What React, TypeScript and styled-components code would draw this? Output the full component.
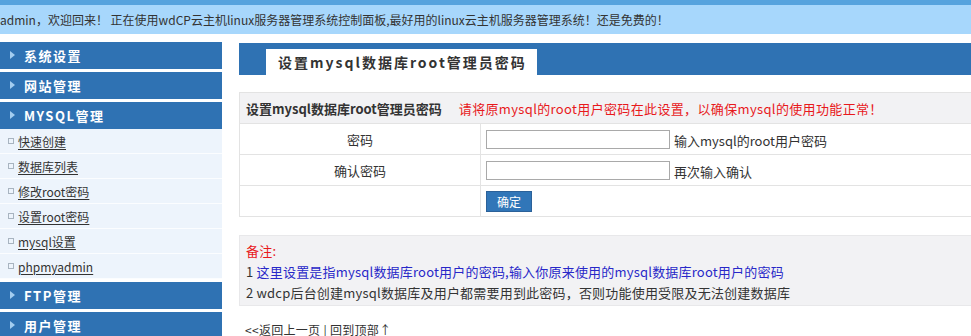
import React from "react";
import styled, { createGlobalStyle } from "styled-components";

const Global = createGlobalStyle`
  html, body { margin: 0; padding: 0; background: #fff; overflow: hidden; }
  body { font-family: "Noto Sans CJK SC", "Noto Sans", sans-serif; font-size: 13px; color: #333; }
`;

const Page = styled.div`
  width: 990px;
`;

const TopBar = styled.div`
  height: 29px;
  border-top: 5px solid #56a3de;
  background: #a7d7fc;
  line-height: 30px;
  font-size: 12px;
  color: #333;
  white-space: nowrap;
`;

const Body = styled.div`
  display: flex;
  align-items: flex-start;
  gap: 17px;
  margin-top: 8px;
`;

const Sidebar = styled.div`
  width: 222px;
  flex: none;
  display: flex;
  flex-direction: column;
`;

const MenuHead = styled.div`
  height: 27px;
  margin-bottom: 3px;
  background: #2f72b3;
  display: flex;
  align-items: center;
  padding-left: 10px;
  color: #fff;
  font-weight: bold;
  font-size: 13px;
  letter-spacing: 1.5px;
  &::before {
    content: "";
    width: 0;
    height: 0;
    border-top: 4px solid transparent;
    border-bottom: 4px solid transparent;
    border-left: 5px solid #a3cdf0;
    margin-right: 9px;
    margin-top: -2px;
  }
`;

const SubList = styled.div`
  display: flex;
  flex-direction: column;
  margin-top: -3px;
  margin-bottom: 3px;
`;

const SubItem = styled.a`
  height: 24px;
  border-bottom: 1px solid #fbfdff;
  background: #edf4fc;
  display: flex;
  align-items: center;
  padding-left: 8px;
  font-size: 12px;
  color: #333;
  text-decoration: underline;
  text-underline-offset: 2px;
  &::before {
    content: "";
    width: 4px;
    height: 4px;
    border: 1px solid #a8b4c0;
    margin-right: 4px;
  }
`;

const Main = styled.div`
  flex: 1;
  display: flex;
  flex-direction: column;
  padding-top: 1px;
`;

const TitleBar = styled.div`
  height: 32px;
  background: #2f72b3;
  display: flex;
  align-items: flex-end;
  padding-left: 27px;
`;

const TitleTab = styled.div`
  height: 26px;
  background: #fff;
  padding: 0 10px 0 12px;
  display: flex;
  align-items: center;
  font-size: 14px;
  font-weight: bold;
  letter-spacing: 2px;
  color: #333;
`;

const Table = styled.table`
  margin-top: 17px;
  border-collapse: collapse;
  width: 100%;
`;

const HeadCell = styled.td`
  height: 30px;
  background: #f2f2f4;
  border: 1px solid #e3e3e3;
  padding: 0 6px;
  font-size: 13px;
  white-space: nowrap;
`;

const HeadTitle = styled.b`
  color: #333;
  margin-right: 17px;
`;

const Warn = styled.span`
  color: #e8191c;
  letter-spacing: 0.35px;
`;

const LabelCell = styled.td`
  width: 240px;
  height: 30px;
  padding: 0;
  border: 1px solid #e3e3e3;
  text-align: center;
  font-size: 13px;
  color: #333;
`;

const FieldCell = styled.td`
  border: 1px solid #e3e3e3;
  padding: 0 5px;
  font-size: 13px;
  color: #333;
  height: 30px;
`;

const Input = styled.input`
  box-sizing: border-box;
  width: 184px;
  height: 19px;
  border: 1px solid #a9a9a9;
  margin: 0 4px 0 0;
  vertical-align: middle;
  padding: 0;
`;

const Hint = styled.span`
  vertical-align: middle;
`;

const Button = styled.button`
  box-sizing: border-box;
  width: 46px;
  height: 21px;
  background: #3176b8;
  border: 1px solid #2b6199;
  color: #fff;
  font-family: "Noto Sans CJK SC", sans-serif;
  font-size: 12px;
  padding: 0;
  vertical-align: middle;
`;

const Notes = styled.div`
  margin-top: 18px;
  box-sizing: border-box;
  height: 71px;
  background: #f2f2f4;
  border: 1px solid #e8e8ea;
  padding: 4px 6px 0;
  font-size: 13px;
  line-height: 21px;
  letter-spacing: 0.2px;
`;

const NoteTitle = styled.div`
  color: #e8191c;
`;

const NoteLine = styled.div`
  color: #333;
`;

const Blue = styled.span`
  color: #2828c8;
`;

const Footer = styled.div`
  margin-top: 16px;
  padding-left: 6px;
  font-size: 12px;
  line-height: 16px;
  letter-spacing: 0.3px;
  color: #333;
`;

const subItems = ["快速创建", "数据库列表", "修改root密码", "设置root密码", "mysql设置", "phpmyadmin"];

export default function App() {
  return (
    <Page>
      <Global />
      <TopBar>admin，欢迎回来！ 正在使用wdCP云主机linux服务器管理系统控制面板,最好用的linux云主机服务器管理系统！还是免费的！</TopBar>
      <Body>
        <Sidebar>
          <MenuHead>系统设置</MenuHead>
          <MenuHead>网站管理</MenuHead>
          <MenuHead>MYSQL管理</MenuHead>
          <SubList>
            {subItems.map((s) => (
              <SubItem key={s}>{s}</SubItem>
            ))}
          </SubList>
          <MenuHead>FTP管理</MenuHead>
          <MenuHead>用户管理</MenuHead>
        </Sidebar>
        <Main>
          <TitleBar>
            <TitleTab>设置mysql数据库root管理员密码</TitleTab>
          </TitleBar>
          <Table>
            <tbody>
              <tr>
                <HeadCell colSpan={2}>
                  <HeadTitle>设置mysql数据库root管理员密码</HeadTitle>
                  <Warn>请将原mysql的root用户密码在此设置，以确保mysql的使用功能正常！</Warn>
                </HeadCell>
              </tr>
              <tr>
                <LabelCell>密码</LabelCell>
                <FieldCell>
                  <Input type="password" />
                  <Hint>输入mysql的root用户密码</Hint>
                </FieldCell>
              </tr>
              <tr>
                <LabelCell>确认密码</LabelCell>
                <FieldCell>
                  <Input type="password" />
                  <Hint>再次输入确认</Hint>
                </FieldCell>
              </tr>
              <tr>
                <LabelCell />
                <FieldCell>
                  <Button>确定</Button>
                </FieldCell>
              </tr>
            </tbody>
          </Table>
          <Notes>
            <NoteTitle>备注:</NoteTitle>
            <NoteLine>
              1 <Blue>这里设置是指mysql数据库root用户的密码,输入你原来使用的mysql数据库root用户的密码</Blue>
            </NoteLine>
            <NoteLine>2 wdcp后台创建mysql数据库及用户都需要用到此密码，否则功能使用受限及无法创建数据库</NoteLine>
          </Notes>
          <Footer>&lt;&lt;返回上一页 | 回到顶部↑</Footer>
        </Main>
      </Body>
    </Page>
  );
}
